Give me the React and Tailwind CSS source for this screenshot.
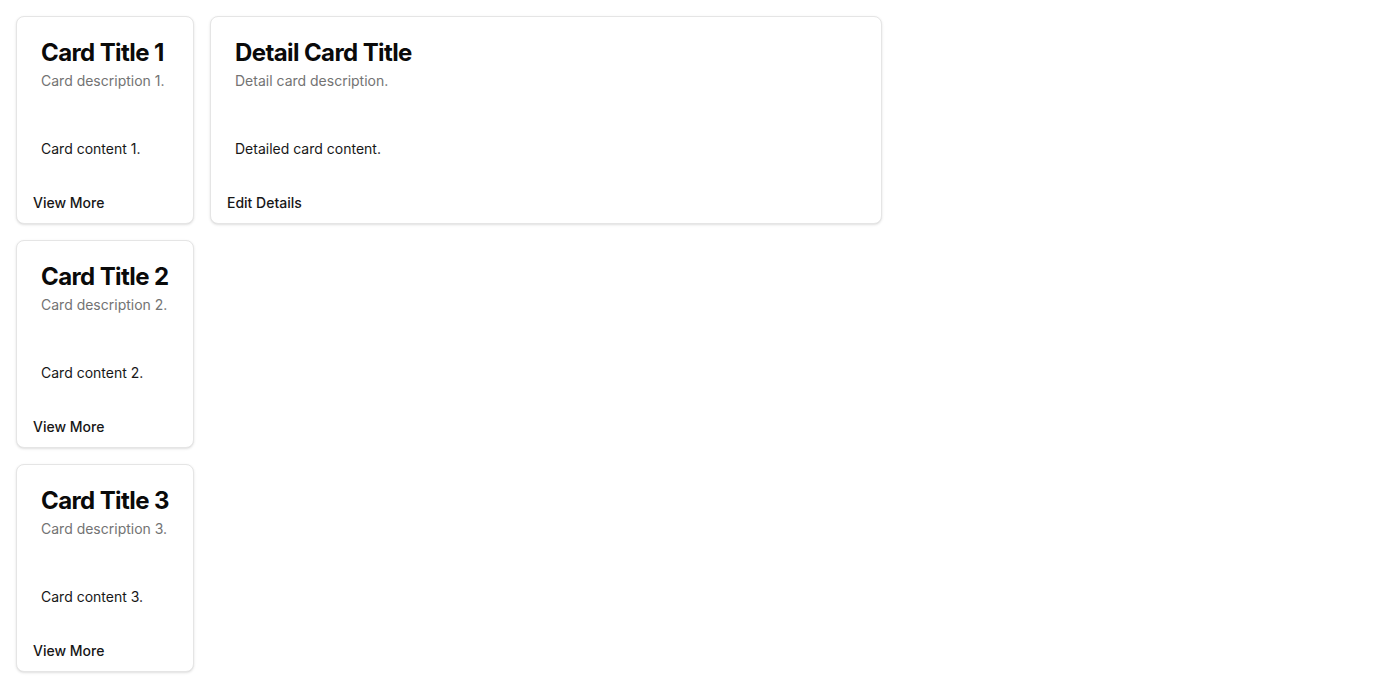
import React from "react";

function Card({ title, desc, content, action, className = "" }) {
  return (
    <div className={"flex flex-col rounded-lg border border-[#e5e5e5] bg-white text-[#0a0a0a] shadow-sm " + className}>
      <div className="flex flex-col gap-1.5 p-6">
        <h3 className="text-2xl font-bold leading-none tracking-tight">{title}</h3>
        <p className="text-sm text-[#737373]">{desc}</p>
      </div>
      <div className="p-6 text-sm leading-5 text-[#171717]">{content}</div>
      <div className="flex items-center">
        <button className="h-10 px-4 text-sm font-medium text-[#171717]">{action}</button>
      </div>
    </div>
  );
}

export default function App() {
  return (
    <div className="flex gap-4 p-4 bg-white min-h-screen" style={{ fontFamily: "Inter, 'Noto Sans', sans-serif" }}>
      <div className="flex flex-col gap-4 w-[178px]">
        {[1, 2, 3].map((i) => (
          <Card
            key={i}
            title={`Card Title ${i}`}
            desc={`Card description ${i}.`}
            content={`Card content ${i}.`}
            action="View More"
          />
        ))}
      </div>
      <div className="w-[672px] self-start">
        <Card
          title="Detail Card Title"
          desc="Detail card description."
          content="Detailed card content."
          action="Edit Details"
        />
      </div>
    </div>
  );
}
